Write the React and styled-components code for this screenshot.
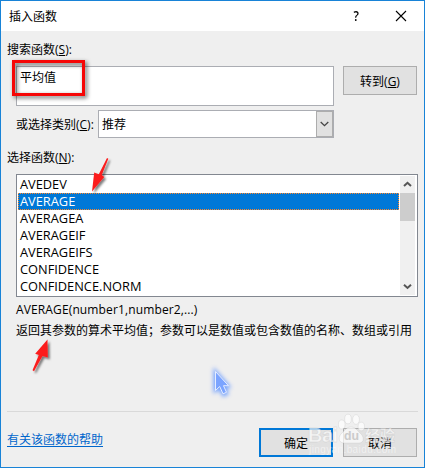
import React from "react";
import styled, { createGlobalStyle } from "styled-components";

const GlobalStyle = createGlobalStyle`
  body {
    margin: 0;
    background: #efefef;
  }

  * {
    box-sizing: border-box;
  }
`;

const Dialog = styled.div`
  position: relative;
  display: flex;
  flex-direction: column;
  width: 425px;
  height: 468px;
  border: 1px solid #1883d7;
  background: #efefef;
  color: #000;
  font-family: "Open Sans", "Noto Sans CJK SC", sans-serif;
  font-size: 12px;
  line-height: 17px;
  white-space: nowrap;
  overflow: hidden;
`;

const TitleBar = styled.header`
  display: flex;
  align-items: center;
  flex: none;
  height: 30px;
  padding: 0 17px 0 8px;
  background: #fff;
`;

const Title = styled.span`
  flex: 1;
`;

const HelpMark = styled.span`
  margin-right: 36px;
  font-size: 14px;
  font-weight: 600;
  line-height: 16px;
  transform: scaleX(0.85);
`;

const Body = styled.main`
  display: flex;
  flex-direction: column;
  flex: 1;
  padding: 10px 6px 0;
`;

const Label = styled.label`
  display: block;
  height: 17px;
  margin-bottom: ${(p) => p.$gap || 0}px;
`;

const Fields = styled.section`
  display: flex;
  gap: 9px;
  padding-left: 9px;
  margin-bottom: 11px;
`;

const FieldColumn = styled.div`
  display: flex;
  flex-direction: column;
  gap: 4px;
  width: 318px;
`;

const SearchBox = styled.div`
  height: 40px;
  padding: 2px 3px;
  border: 1px solid #abadb3;
  background: #fff;
`;

const CategoryRow = styled.div`
  display: flex;
  align-items: center;
  justify-content: space-between;
  height: 28px;
`;

const Combo = styled.div`
  display: flex;
  align-items: center;
  width: 236px;
  height: 28px;
  padding-left: 3px;
  border: 1px solid #abadb3;
  background: #fff;

  span {
    flex: 1;
  }
`;

const ComboButton = styled.div`
  display: flex;
  align-items: center;
  justify-content: center;
  width: 17px;
  height: 26px;
  border: 1px solid #adadad;
  background: #e1e1e1;
`;

const Button = styled.button`
  flex: none;
  width: 74px;
  height: 29px;
  padding: 1px 0 0;
  border: ${(p) => (p.$primary ? "2px solid #0078d7" : "1px solid #adadad")};
  background: #e1e1e1;
  color: #000;
  font: inherit;
`;

const ListBox = styled.div`
  display: flex;
  width: 402px;
  height: 123px;
  margin-left: 9px;
  padding: 1px;
  border: 1px solid #828790;
  background: #fff;
`;

const Items = styled.ul`
  width: 381px;
  margin: 0;
  padding: 0;
  font-size: 12.8px;
  list-style: none;
`;

const Item = styled.li`
  height: 17px;
  padding-left: 2px;
  color: ${(p) => (p.$selected ? "#fff" : "#000")};
  background: ${(p) => (p.$selected ? "#0078d7" : "transparent")};
  outline: ${(p) => (p.$selected ? "1px dotted #ff8728" : "none")};
  outline-offset: -1px;
`;

const ScrollBar = styled.div`
  display: flex;
  flex-direction: column;
  width: 15px;
  margin-left: 1px;
  background: #f0f0f0;
`;

const ScrollArrow = styled.div`
  display: flex;
  align-items: center;
  justify-content: center;
  height: 17px;
`;

const Thumb = styled.div`
  height: 28px;
  margin-bottom: auto;
  background: #cdcdcd;
`;

const Description = styled.div`
  height: 114px;
  margin-left: 9px;
`;

const Syntax = styled.div`
  padding: 4px 0;
  letter-spacing: 0.13px;
`;

const Footer = styled.footer`
  display: flex;
  align-items: flex-start;
  width: 411px;
  padding: 16px 1px 0 0;
  border-top: 1px solid #d9d9d9;
`;

const HelpLink = styled.a`
  flex: 1;
  margin-top: 3px;
  color: #0066cc;
  text-decoration: underline;
  text-underline-offset: 2px;
`;

const Actions = styled.div`
  display: flex;
  gap: 10px;
`;

const Highlight = styled.div`
  position: absolute;
  left: 11px;
  top: 59px;
  width: 73px;
  height: 36px;
  border: 3px solid #f60606;
  filter: drop-shadow(2px 2px 2px rgba(0, 0, 0, 0.6));
`;

const Overlay = styled.svg`
  position: absolute;
  left: -1px;
  top: -1px;
  pointer-events: none;
`;

const functions = [
  { name: "AVEDEV" },
  { name: "AVERAGE", selected: true },
  { name: "AVERAGEA" },
  { name: "AVERAGEIF" },
  { name: "AVERAGEIFS" },
  { name: "CONFIDENCE" },
  { name: "CONFIDENCE.NORM" },
];

const Chevron = ({ up }) => (
  <svg width="9" height="7" viewBox="0 0 9 7" fill="none">
    <path
      d={up ? "M1 5 4.5 1.8 8 5" : "M1 1.8 4.5 5 8 1.8"}
      stroke="#555"
      strokeWidth="2"
    />
  </svg>
);

const Annotations = () => (
  <Overlay width="425" height="468" viewBox="0 0 425 468">
    <defs>
      <filter id="shadow" x="-50%" y="-50%" width="200%" height="200%">
        <feDropShadow dx="2" dy="2" stdDeviation="1.3" floodOpacity="0.5" />
      </filter>
      <filter id="glow" x="-60%" y="-60%" width="220%" height="220%">
        <feGaussianBlur stdDeviation="2" />
      </filter>
    </defs>
    <g fill="#fb1d1d" filter="url(#shadow)">
      <path d="M107 158 108.3 158.7 101.8 175 104.2 177 92 191.5 94.2 172.5 98.8 174.3Z" />
      <path d="M47.5 339.5 47.8 357.5 42.5 356 34 371.2 32.5 370.3 38.8 355 35.2 353.8Z" />
    </g>
    <path
      d="M215 371V391L219.5 387.5 223.5 395 227 393.5 224 386.5H228.5Z"
      fill="#4d88ff"
      stroke="#6c9cff"
      strokeWidth="3"
      opacity=".9"
      filter="url(#glow)"
    />
    <path
      d="M215.5 371.5V390.5L219.7 386.5 223 393.8 226.5 392.3 223.5 385.7H228.5Z"
      fill="#7ba4ff"
      stroke="#e5edff"
      strokeWidth="1"
    />
  </Overlay>
);

// Translucent stamp over the bottom right corner
const Watermark = () => (
  <Overlay
    width="425"
    height="468"
    viewBox="0 0 425 468"
    fontFamily='"Liberation Sans", "Noto Sans CJK SC", sans-serif'
  >
    <g
      fill="#fff"
      fillOpacity=".68"
      stroke="#aaa"
      strokeOpacity=".25"
      strokeWidth=".8"
    >
      <ellipse cx="341.7" cy="424.5" rx="3.3" ry="4.5" />
      <ellipse cx="348" cy="419" rx="3.3" ry="4.8" />
      <ellipse cx="356" cy="419.5" rx="3.4" ry="4.8" />
      <ellipse cx="361.3" cy="426.5" rx="3.2" ry="4.3" />
      <path d="M351 427C347 427 345 430 342 433 338 436 338 443 344 443H359C365 443 364 436 360 433 357 430 355 427 351 427Z" />
      <text x="308" y="442" fontSize="20" fontWeight="700" textLength="30">
        Bai
      </text>
      <text x="365" y="441" fontSize="15" fontWeight="700" textLength="30">
        经验
      </text>
      <text x="309" y="453" fontSize="10" textLength="87" strokeWidth=".2">
        jingyan.baidu.com
      </text>
    </g>
    <text
      x="344"
      y="440"
      fill="#cbcbcb"
      fontSize="13"
      fontWeight="700"
      textLength="15"
      lengthAdjust="spacingAndGlyphs"
    >
      du
    </text>
  </Overlay>
);

const App = () => {
  return (
    <>
      <GlobalStyle />
      <Dialog>
        <TitleBar>
          <Title>插入函数</Title>
          <HelpMark>?</HelpMark>
          <svg width="12" height="12" viewBox="0 0 12 12">
            <path d="M1 1 11 11M11 1 1 11" stroke="#000" strokeWidth="1.1" />
          </svg>
        </TitleBar>
        <Body>
          <Label $gap={8}>
            搜索函数(<u>S</u>):
          </Label>
          <Fields>
            <FieldColumn>
              <SearchBox>平均值</SearchBox>
              <CategoryRow>
                <Label>
                  或选择类别(<u>C</u>):
                </Label>
                <Combo>
                  <span>推荐</span>
                  <ComboButton>
                    <svg width="9" height="6" viewBox="0 0 9 6" fill="none">
                      <path d="M.7 1 4.5 4.6 8.3 1" stroke="#444" strokeWidth="1.3" />
                    </svg>
                  </ComboButton>
                </Combo>
              </CategoryRow>
            </FieldColumn>
            <Button>
              转到(<u>G</u>)
            </Button>
          </Fields>
          <Label $gap={8}>
            选择函数(<u>N</u>):
          </Label>
          <ListBox>
            <Items>
              {functions.map((f) => (
                <Item key={f.name} $selected={f.selected}>
                  {f.name}
                </Item>
              ))}
            </Items>
            <ScrollBar>
              <ScrollArrow>
                <Chevron up />
              </ScrollArrow>
              <Thumb />
              <ScrollArrow>
                <Chevron />
              </ScrollArrow>
            </ScrollBar>
          </ListBox>
          <Description>
            <Syntax>AVERAGE(number1,number2,...)</Syntax>
            <div>返回其参数的算术平均值；参数可以是数值或包含数值的名称、数组或引用</div>
          </Description>
          <Footer>
            <HelpLink>有关该函数的帮助</HelpLink>
            <Actions>
              <Button $primary>确定</Button>
              <Button>取消</Button>
            </Actions>
          </Footer>
        </Body>
        <Highlight />
        <Annotations />
        <Watermark />
      </Dialog>
    </>
  );
};

export default App;
